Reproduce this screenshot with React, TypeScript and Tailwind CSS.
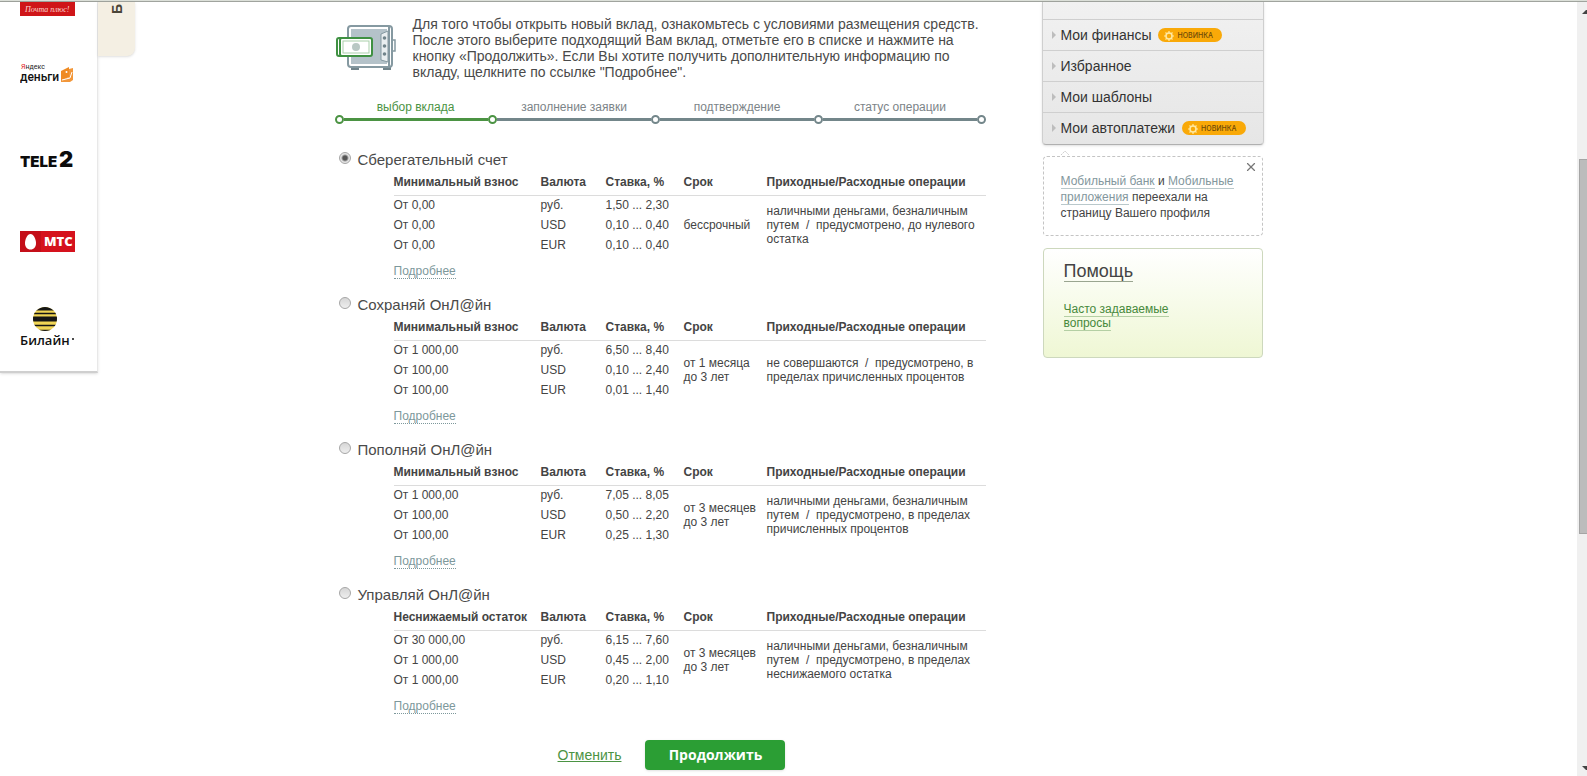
import type { ReactNode } from 'react';
import { X } from 'lucide-react';

type Rate = [amount: string, currency: string, rate: string];

interface Deposit {
	id: string;
	title: string;
	amountLabel: string;
	rates: Rate[];
	term: string;
	operations: string;
}

const DEPOSITS: Deposit[] = [
	{
		id: 'savings',
		title: 'Сберегательный счет',
		amountLabel: 'Минимальный взнос',
		rates: [
			['От 0,00', 'руб.', '1,50 ... 2,30'],
			['От 0,00', 'USD', '0,10 ... 0,40'],
			['От 0,00', 'EUR', '0,10 ... 0,40'],
		],
		term: 'бессрочный',
		operations: 'наличными деньгами, безналичным путем \u00a0/ \u00a0предусмотрено, до нулевого остатка',
	},
	{
		id: 'keep',
		title: 'Сохраняй ОнЛ@йн',
		amountLabel: 'Минимальный взнос',
		rates: [
			['От 1 000,00', 'руб.', '6,50 ... 8,40'],
			['От 100,00', 'USD', '0,10 ... 2,40'],
			['От 100,00', 'EUR', '0,01 ... 1,40'],
		],
		term: 'от 1 месяца до 3 лет',
		operations: 'не совершаются \u00a0/ \u00a0предусмотрено, в пределах причисленных процентов',
	},
	{
		id: 'refill',
		title: 'Пополняй ОнЛ@йн',
		amountLabel: 'Минимальный взнос',
		rates: [
			['От 1 000,00', 'руб.', '7,05 ... 8,05'],
			['От 100,00', 'USD', '0,50 ... 2,20'],
			['От 100,00', 'EUR', '0,25 ... 1,30'],
		],
		term: 'от 3 месяцев до 3 лет',
		operations: 'наличными деньгами, безналичным путем \u00a0/ \u00a0предусмотрено, в пределах причисленных процентов',
	},
	{
		id: 'manage',
		title: 'Управляй ОнЛ@йн',
		amountLabel: 'Неснижаемый остаток',
		rates: [
			['От 30 000,00', 'руб.', '6,15 ... 7,60'],
			['От 1 000,00', 'USD', '0,45 ... 2,00'],
			['От 1 000,00', 'EUR', '0,20 ... 1,10'],
		],
		term: 'от 3 месяцев до 3 лет',
		operations: 'наличными деньгами, безналичным путем \u00a0/ \u00a0предусмотрено, в пределах неснижаемого остатка',
	},
];

const MENU = [
	{ label: 'Мои финансы', isNew: true },
	{ label: 'Избранное', isNew: false },
	{ label: 'Мои шаблоны', isNew: false },
	{ label: 'Мои автоплатежи', isNew: true },
];

function PartnerRail() {
	return (
		<div className="flex w-[135px] shrink-0 items-start">
			<nav className="flex h-[371px] w-[98px] flex-col items-start border-r border-b-2 border-r-[#e8e8e8] border-b-[#cfcfcf] pl-5 shadow-sm">
				<a href="#telecom" className="block h-[60px]">
					<svg width="55" height="14">
						<rect width="55" height="14" fill="#cf1518" />
						<text x="5" y="10" fontSize="8" fontStyle="italic" fill="#fbd5d0" fontFamily="Liberation Serif, serif">
							Почта плюс!
						</text>
					</svg>
				</a>
				<a href="#yandex" className="block h-[83px]">
					<svg width="56" height="24" fontFamily="Roboto, sans-serif">
						<text x="1" y="7" fontSize="7" fill="#222">
							<tspan fill="#e01b1b">Я</tspan>ндекс
						</text>
						<text x="0" y="19" fontSize="12" fontWeight="500" fill="#111">
							деньги
						</text>
						<path d="M41 9l8-4v10l-8 4z" fill="#ef8a22" />
						<path d="M49 7l4-1v12l-3 2h-9v-2l8-3z" fill="#f2973a" />
						<path d="M42 18l8-2 2-6" fill="none" stroke="#fff" />
						<circle cx="46.500" cy="10" r="1" fill="#fff" />
					</svg>
				</a>
				<a href="#tele2" className="block h-[86px]">
					<svg width="60" height="30" fontFamily="Inter, sans-serif" fontWeight="900" fill="#0c0c0c">
						<text x="0" y="22" fontSize="15">
							TELE
						</text>
						<text x="39" y="22" fontSize="22">
							2
						</text>
					</svg>
				</a>
				<a href="#mts" className="block h-[75px]">
					<svg width="55" height="21">
						<rect width="55" height="21" fill="#d5121d" />
						<rect width="21" height="21" fill="#c40f19" />
						<path d="M10.500 3c3 0 5.500 5 5.500 9s-2 6.500-5.500 6.500S5 16 5 12s2.500-9 5.500-9z" fill="#fff" />
						<text x="24" y="15" fontSize="13" fontWeight="800" fill="#fff" fontFamily="Open Sans, sans-serif">
							МТС
						</text>
					</svg>
				</a>
				<a href="#beeline" className="block">
					<svg width="58" height="44">
						<defs>
							<clipPath id="bee">
								<circle cx="25" cy="13" r="12" />
							</clipPath>
						</defs>
						<g clipPath="url(#bee)">
							<rect width="50" height="26" fill="#f0d555" />
							<path d="M12 2.500h26" stroke="#161616" strokeWidth="4" />
							<path d="M12 7.500h26" stroke="#161616" strokeWidth="1.500" />
							<path d="M12 13h26" stroke="#161616" strokeWidth="5" />
							<path d="M12 19.500h26M12 24.500h26" stroke="#161616" strokeWidth="1.500" />
						</g>
						<text x="0" y="39" fontSize="13" fontWeight="600" fill="#111" fontFamily="Open Sans, sans-serif">
							Билайн
						</text>
						<circle cx="53" cy="33" r="1" fill="#111" />
					</svg>
				</a>
			</nav>
			<div className="flex h-[54px] w-[37px] justify-center rounded-br-lg bg-[#f4efe3] shadow-sm">
				<span className="h-3 text-sm leading-5 font-bold text-[#4a4538] [writing-mode:sideways-lr]">Б</span>
			</div>
		</div>
	);
}

function SafeIcon() {
	return (
		<svg width="62" height="48" className="mt-2 shrink-0">
			<path d="M16 43h8v3h-8zM48 43h8v3h-8z" fill="#71848b" />
			<rect x="13" y="2" width="44" height="41" rx="3" fill="#fff" stroke="#8599a1" strokeWidth="2" />
			<rect x="16" y="5" width="36" height="35" fill="#b4c2c9" />
			<path d="M54 2v41" stroke="#8599a1" strokeWidth="2" />
			<path d="M58 16h2v11h-2" fill="#fff" stroke="#8599a1" strokeWidth="1.500" />
			<path d="M53 7l-7 3v26l7 2z" fill="#e9eef0" stroke="#8599a1" />
			<circle cx="49.500" cy="14" r="1.800" fill="#71848b" />
			<circle cx="49.500" cy="22" r="1.800" fill="#71848b" />
			<circle cx="49.500" cy="30" r="1.800" fill="#71848b" />
			<rect x="2" y="14" width="10" height="18" rx="2" fill="#fff" stroke="#3f9142" strokeWidth="2" />
			<rect x="5" y="14" width="32" height="18" rx="2" fill="#fff" stroke="#3f9142" strokeWidth="2" />
			<rect x="8" y="17" width="26" height="12" fill="none" stroke="#a9cfaa" />
			<circle cx="21" cy="23" r="4" fill="#b9c8c4" />
		</svg>
	);
}

function Dot({ active }: { active?: boolean }) {
	return (
		<span
			className={
				active
					? 'size-[9px] shrink-0 rounded-full border-2 border-[#4b9343] bg-white'
					: 'size-[9px] shrink-0 rounded-full border-2 border-[#73868a] bg-white'
			}
		/>
	);
}

function Step({ label, active }: { label: string; active?: boolean }) {
	return (
		<li className={active ? 'flex w-[162px] shrink-0 flex-col leading-[15px]' : 'flex flex-1 flex-col leading-[15px]'}>
			<span className={active ? 'text-center text-[#4b9343]' : 'pr-2 text-center text-[#7c8488]'}>{label}</span>
			<span className="flex items-center">
				{active && <Dot active />}
				<span className={active ? 'h-[3px] flex-1 bg-[#4b9343]' : 'h-[3px] flex-1 bg-[#73868a]'} />
				<Dot active={active} />
			</span>
		</li>
	);
}

function DepositOption({ deposit, defaultChecked }: { deposit: Deposit; defaultChecked: boolean }) {
	const [first, ...rest] = deposit.rates;

	return (
		<section className="h-[145px]">
			<div className="flex items-start gap-[7px] pl-1">
				<input
					type="radio"
					name="deposit"
					id={deposit.id}
					defaultChecked={defaultChecked}
					className="mt-0.5 size-3 appearance-none rounded-full border border-[#a6a6a6] bg-linear-to-b from-[#d6d6d6] to-[#eeeeee] checked:bg-[radial-gradient(circle,#555_0_2px,#e4e4e4_4px)]"
				/>
				<label htmlFor={deposit.id} className="text-[15px] leading-5 text-[#4a4a4a]">
					{deposit.title}
				</label>
			</div>
			<div className="pl-[59px]">
				<table className="w-full table-fixed text-left text-[#444]">
					<colgroup>
						<col className="w-[147px]" />
						<col className="w-[65px]" />
						<col className="w-[78px]" />
						<col className="w-[83px]" />
						<col />
					</colgroup>
					<thead>
						<tr className="h-[25px] border-b border-[#dcdcdc] align-top whitespace-nowrap">
							<th className="pt-[5px]">{deposit.amountLabel}</th>
							<th className="pt-[5px]">Валюта</th>
							<th className="pt-[5px]">Ставка, %</th>
							<th className="pt-[5px]">Срок</th>
							<th className="pt-[5px]">Приходные/Расходные операции</th>
						</tr>
					</thead>
					<tbody>
						<tr className="h-5">
							{first.map((cell) => (
								<td key={cell}>{cell}</td>
							))}
							<td rowSpan={3} className="pr-2">
								{deposit.term}
							</td>
							<td rowSpan={3}>{deposit.operations}</td>
						</tr>
						{rest.map(([amount, currency, rate]) => (
							<tr key={currency} className="h-5">
								<td>{amount}</td>
								<td>{currency}</td>
								<td>{rate}</td>
							</tr>
						))}
					</tbody>
				</table>
				<a href="#details" className="mt-[9px] inline-block border-b border-dotted border-[#7d989b] text-[#7d989b]">
					Подробнее
				</a>
			</div>
		</section>
	);
}

function NewBadge() {
	return (
		<span className="flex h-3.5 w-16 items-center gap-[3px] rounded-full bg-[#f9a908] pt-px pl-1.5 text-[7px] font-medium text-[#6d4a08] [font-family:Inter,sans-serif]">
			<svg width="10" height="10" viewBox="0 0 10 10" fill="none" stroke="#ffe9a3">
				<circle cx="5" cy="5" r="3" strokeWidth="1.500" />
				<path d="M5 0v2M5 8v2M0 5h2M8 5h2M1.500 1.500l1.400 1.400M7.100 7.100l1.400 1.400M1.500 8.500l1.400-1.400M7.100 2.900l1.400-1.400" strokeWidth="1.200" />
			</svg>
			НОВИНКА
		</span>
	);
}

function SideLink({ children }: { children: ReactNode }) {
	return (
		<a href="#profile" className="border-b border-[#b9c8cb] text-[#83979d]">
			{children}
		</a>
	);
}

function Sidebar() {
	return (
		<aside className="w-[222px] shrink-0">
			<nav className="rounded-b-sm border border-t-0 border-[#cfcfcf] border-b-[#b0b0b0] bg-linear-to-b from-[#f1f1f1] to-[#e6e6e6] pt-[17px] pb-px shadow-sm">
				{MENU.map(({ label, isNew }) => (
					<a key={label} href="#menu" className="flex h-[31px] items-center border-t border-[#cfcfcf] pl-2 text-sm text-[#333]">
						<svg width="10" height="8">
							<path d="M1 0l4 4-4 4z" fill="#bdbdbd" />
						</svg>
						<span className="pr-[7px]">{label}</span>
						{isNew && <NewBadge />}
					</a>
				))}
			</nav>
			<svg width="10" height="6" className="mt-[5px] ml-[18px]">
				<path d="M1 5l4-4 4 4" fill="none" stroke="#ccc" strokeDasharray="2 1" />
			</svg>
			<div className="mx-px flex h-20 items-start justify-between rounded-sm border border-dashed border-[#c4c4c4] pt-4 pl-[17px] text-xs leading-4 text-[#444]">
				<p>
					<SideLink>Мобильный банк</SideLink> и <SideLink>Мобильные</SideLink>
					<br />
					<SideLink>приложения</SideLink> переехали на
					<br />
					страницу Вашего профиля
				</p>
				<button type="button" aria-label="Закрыть" className="-mt-[13px] pr-1">
					<X size={14} strokeWidth={2} color="#777" />
				</button>
			</div>
			<section className="mx-px mt-3 h-[110px] rounded-sm border border-[#cdd8bd] bg-linear-to-b from-white to-[#eff7d4] pt-3 pl-5">
				<h2 className="text-lg leading-5 text-[#444]">
					<a href="#help" className="inline-block border-b border-[#9aa590]">
						Помощь
					</a>
				</h2>
				<p className="mt-5 w-32 leading-3.5">
					<a href="#faq" className="border-b border-[#b4cfa4] text-[#47893c]">
						Часто задаваемые вопросы
					</a>
				</p>
			</section>
		</aside>
	);
}

function Scrollbar() {
	return (
		<div className="flex w-[10px] shrink-0 flex-col items-end bg-[#f0f0f0] pt-2">
			<svg width="5" height="4">
				<path d="M0 4l4-4h1v4z" fill="#444" />
			</svg>
			<div className="h-[145px]" />
			<div className="h-[375px] w-2 border border-r-0 border-[#a5a5a5] bg-[#bcbcbc]" />
			<div className="flex-1" />
			<svg width="5" height="12">
				<path d="M0 2h5v4H4z" fill="#444" />
			</svg>
		</div>
	);
}

export default function App() {
	return (
		<div className="flex min-h-screen flex-col bg-white text-xs leading-3.5 [font-family:'Liberation_Sans',Arial,sans-serif]">
			<div className="h-0.5 border-b border-[#a0a49e] bg-[#dce0d9]" />
			<div className="flex flex-1">
				<PartnerRail />
				<div className="flex-[7]" />
				<main className="w-[651px] shrink-0 pt-3.5">
					<div className="flex items-start gap-4 text-sm leading-4 text-[#4a4a4a]">
						<SafeIcon />
						<p>
							Для того чтобы открыть новый вклад, ознакомьтесь с условиями размещения средств. После этого выберите подходящий Вам вклад, отметьте его в списке и нажмите на кнопку
							«Продолжить». Если Вы хотите получить дополнительную информацию по вкладу, щелкните по ссылке "Подробнее".
						</p>
					</div>
					<ol className="mt-5 mb-[26px] flex">
						<Step label="выбор вклада" active />
						<Step label="заполнение заявки" />
						<Step label="подтверждение" />
						<Step label="статус операции" />
					</ol>
					<form>
						{DEPOSITS.map((deposit, i) => (
							<DepositOption key={deposit.id} deposit={deposit} defaultChecked={i === 0} />
						))}
						<div className="mt-2.5 flex items-center justify-center gap-6 pl-[23px]">
							<a href="#cancel" className="text-sm text-[#4b9343] underline">
								Отменить
							</a>
							<button
								type="button"
								className="h-[30px] w-[140px] rounded-sm bg-[#2b9e34] text-sm font-bold text-white shadow-sm [font-family:'Open_Sans',sans-serif]"
							>
								Продолжить
							</button>
						</div>
					</form>
				</main>
				<div className="w-14 shrink-0" />
				<Sidebar />
				<div className="flex-[11]" />
				<Scrollbar />
			</div>
		</div>
	);
}
